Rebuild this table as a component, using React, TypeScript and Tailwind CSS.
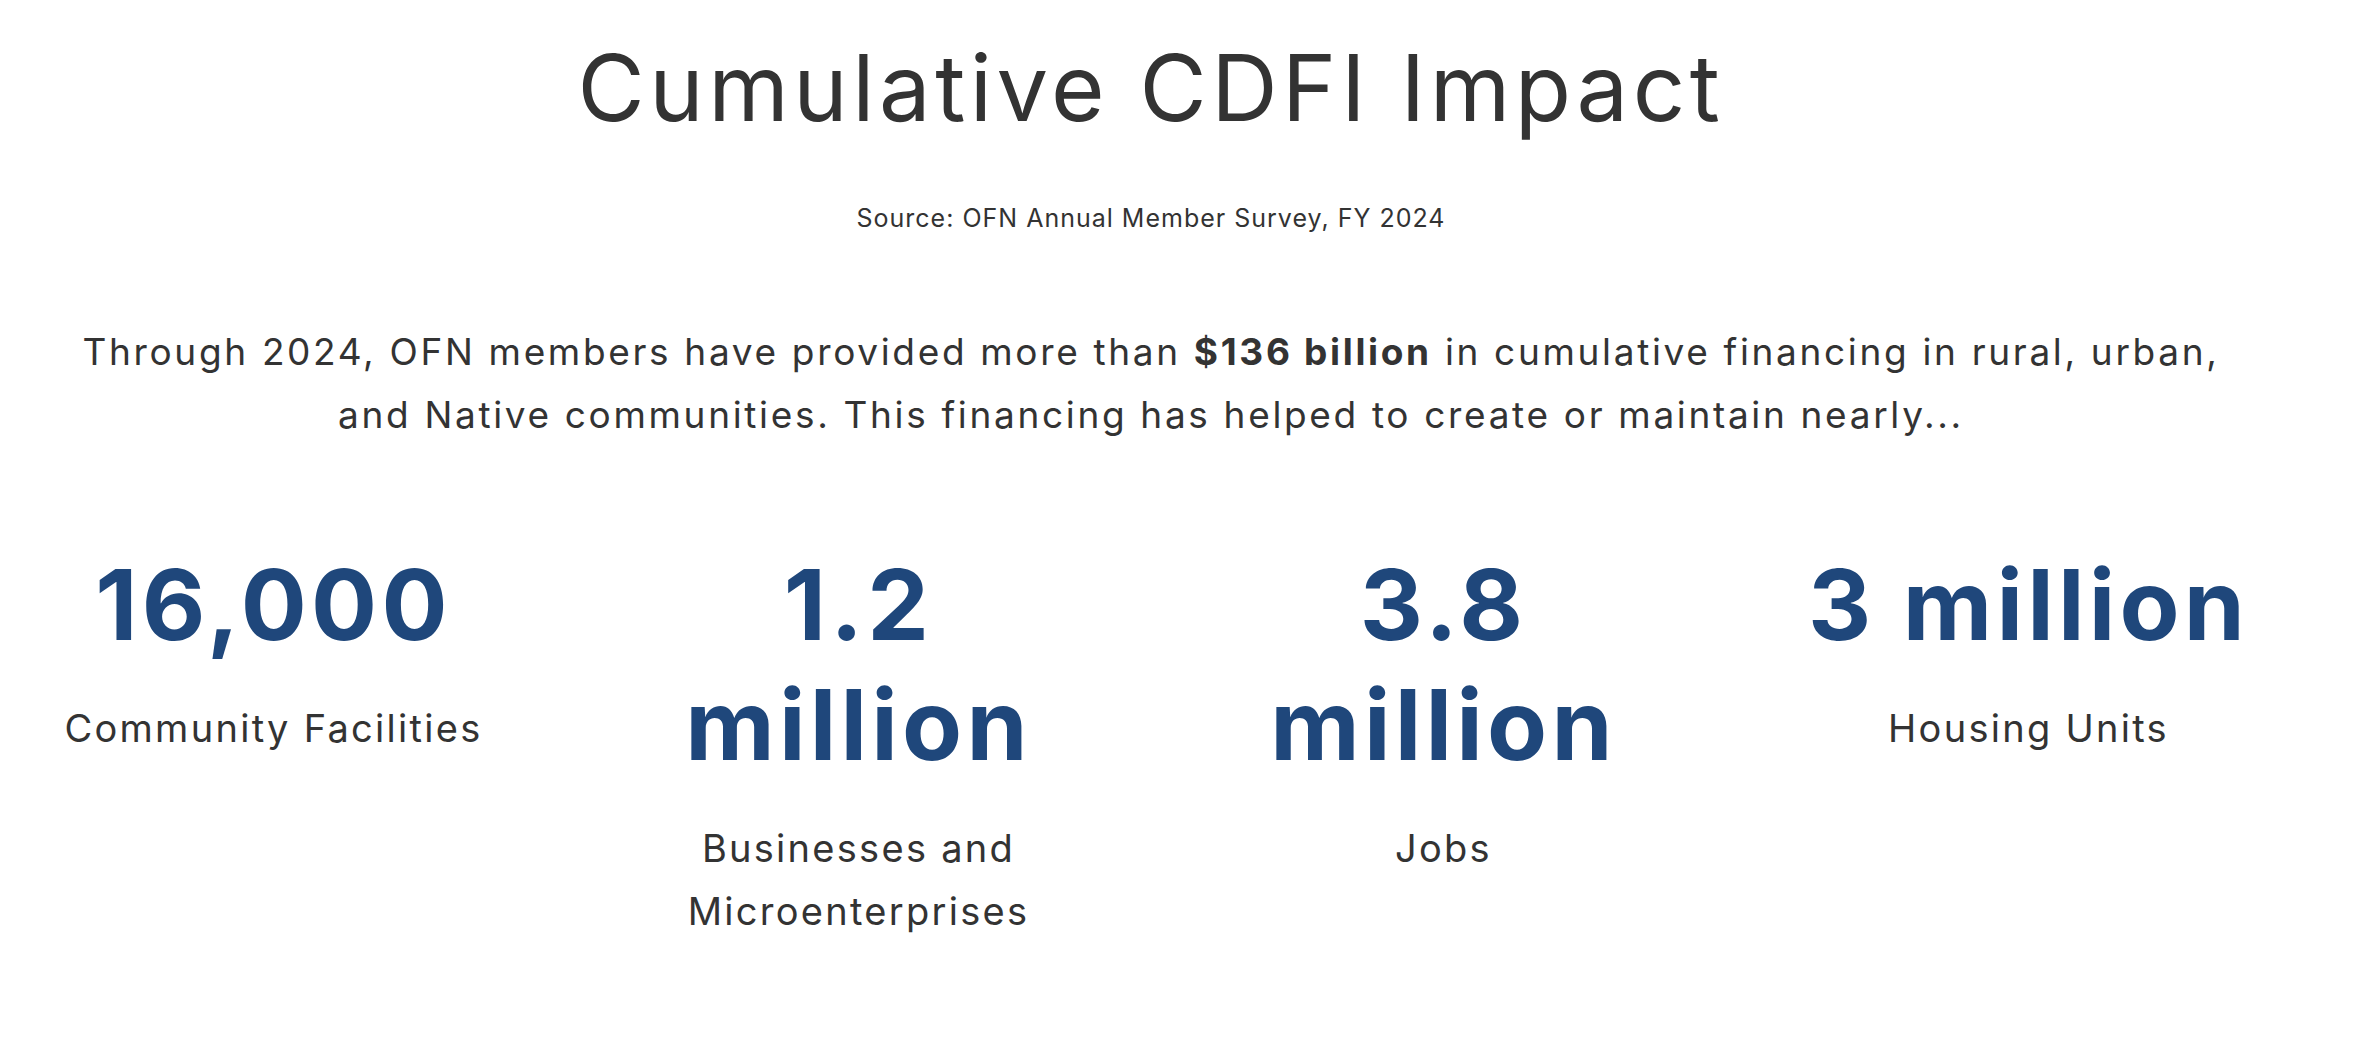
const stats = [
  { value: '16,000', label: 'Community Facilities' },
  { value: '1.2 million', label: 'Businesses and Microenterprises' },
  { value: '3.8 million', label: 'Jobs' },
  { value: '3 million', label: 'Housing Units' },
];

export default function App() {
  return (
    <section className="min-h-screen bg-white text-[#333333] font-['Inter',sans-serif]">
      <div className="w-[2302px] pt-[33px] pb-16 text-center">
        <h1 className="text-[92px] leading-[1.2] font-normal tracking-[0.049em]">Cumulative CDFI Impact</h1>
        <p className="mt-[57px] text-[25px] leading-[1.5] tracking-[0.04em]">
          Source: OFN Annual Member Survey, FY 2024
        </p>
        <p className="mx-auto mt-[82px] max-w-[2170px] text-[37px] leading-[63px] tracking-[0.072em]">
          Through 2024, OFN members have provided more than <strong className="font-bold">$136 billion</strong> in
          cumulative financing in rural, urban, and Native communities. This financing has helped to create or
          maintain nearly...
        </p>
        <div className="mx-[-19px] mt-[99px] grid grid-cols-4">
          {stats.map((stat, i) => (
            <div key={i} className="px-[52px]">
              <h3 className="text-[98px] leading-[120px] font-bold tracking-[0.043em] text-[#1f477b]">{stat.value}</h3>
              <p className="mt-[32px] text-[38px] leading-[63px] tracking-[0.06em]">{stat.label}</p>
            </div>
          ))}
        </div>
      </div>
    </section>
  );
}
